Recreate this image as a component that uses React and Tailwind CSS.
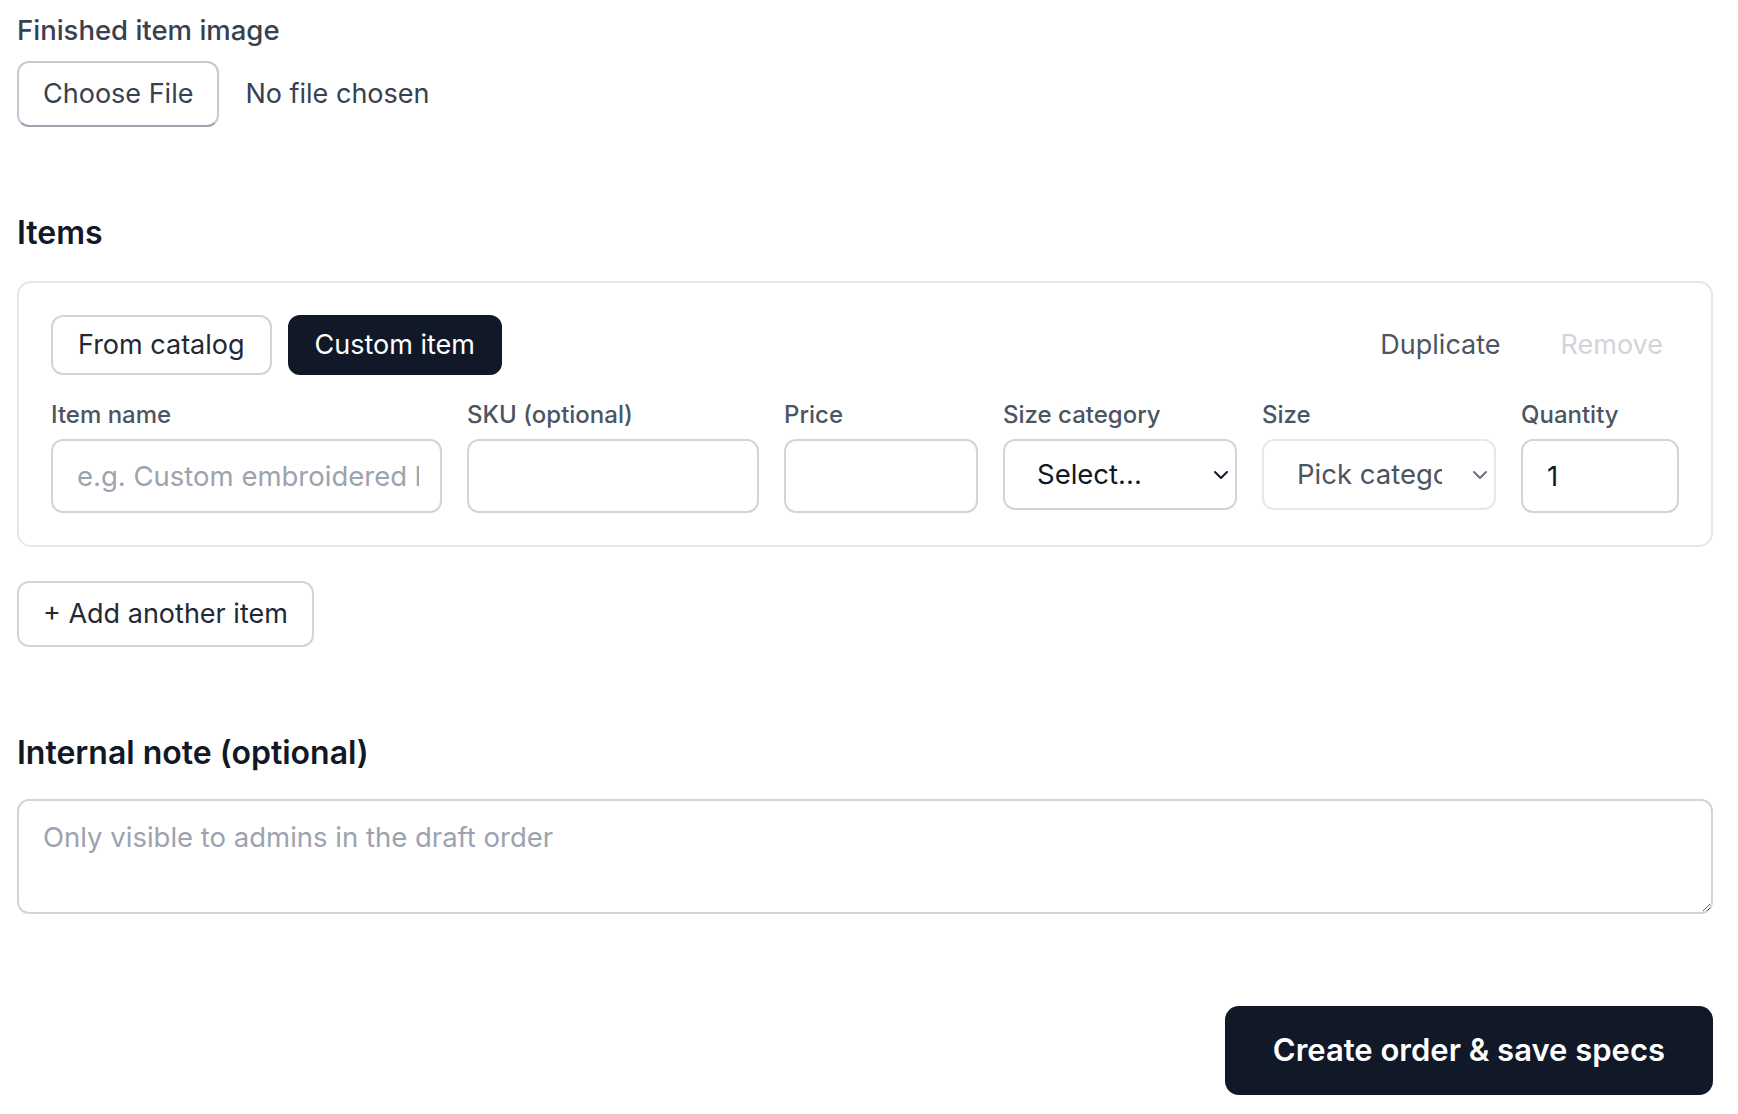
import React from "react";

function Chevron({ className }) {
  return (
    <svg
      viewBox="0 0 16 10"
      className={className}
      fill="none"
      stroke="currentColor"
      strokeWidth="2"
      strokeLinecap="round"
      strokeLinejoin="round"
    >
      <polyline points="2,2 8,8 14,2" />
    </svg>
  );
}

function Field({ label, children }) {
  return (
    <div className="flex flex-col">
      <label className="text-[24px] leading-[32px] font-medium text-[#4b5563]">{label}</label>
      <div className="mt-[8px]">{children}</div>
    </div>
  );
}

const inputCls =
  "block w-full h-[74px] rounded-[12px] border-2 border-[#d1d5db] bg-white pl-[24px] pr-[21px] text-[27.5px] text-[#111827] placeholder:text-[#9ca3af] outline-none";

export default function App() {
  return (
    <div className="min-h-screen bg-white font-['Inter','Noto_Sans',sans-serif] text-[#111827]">
      <div className="ml-[17px] w-[1696px] pt-[10px] pb-[20px]">
        {/* Image upload */}
        <section>
          <label className="block text-[27.5px] leading-[40px] font-medium text-[#374151]">
            Finished item image
          </label>
          <div className="mt-[11px] flex items-center gap-[26px]">
            <button
              type="button"
              className="h-[66px] rounded-[12px] border-2 border-[#c5c9d0] border-b-[#9ca3af] bg-white px-[24px] text-[27px] text-[#374151]"
            >
              Choose File
            </button>
            <span className="text-[27px] text-[#374151]">No file chosen</span>
          </div>
        </section>

        {/* Items */}
        <h2 className="mt-[86px] text-[32px] leading-[40px] font-semibold text-[#111827]">Items</h2>
        <div className="mt-[28px] rounded-[14px] border-2 border-[#e5e7eb] p-[32px]">
          <div className="flex items-center justify-between">
            <div className="flex gap-[16px]">
              <button
                type="button"
                className="h-[60px] rounded-[12px] border-2 border-[#d1d5db] bg-white px-[25px] text-[27px] text-[#1f2937]"
              >
                From catalog
              </button>
              <button
                type="button"
                className="h-[60px] rounded-[12px] border-2 border-[#111827] bg-[#111827] px-[25px] text-[27px] text-white"
              >
                Custom item
              </button>
            </div>
            <div className="flex items-center gap-[28px]">
              <button type="button" className="px-[16px] text-[27px] text-[#4b5563]">
                Duplicate
              </button>
              <button type="button" disabled className="px-[16px] text-[27px] text-[#d1d5db]">
                Remove
              </button>
            </div>
          </div>

          <div className="mt-[24px] grid grid-cols-[391px_292px_194px_234px_234px_1fr] gap-x-[25px]">
            <Field label="Item name">
              <input className={inputCls} placeholder="e.g. Custom embroidered linen napkin" />
            </Field>
            <Field label="SKU (optional)">
              <input className={inputCls} />
            </Field>
            <Field label="Price">
              <input className={inputCls} />
            </Field>
            <Field label="Size category">
              <div className="relative">
                <select className="block w-full h-[71px] appearance-none rounded-[12px] border-2 border-[#d1d5db] bg-white pl-[32px] pr-[48px] text-[27.5px] text-[#111827] outline-none">
                  <option>Select...</option>
                </select>
                <Chevron className="pointer-events-none absolute right-[8px] top-1/2 h-[10px] w-[16px] -translate-y-1/2 text-[#111827]" />
              </div>
            </Field>
            <Field label="Size">
              <div className="relative">
                <select
                  disabled
                  className="block w-full h-[71px] appearance-none rounded-[12px] border-2 border-[#e5e7eb] bg-white pl-[33px] pr-[52px] text-[27.5px] text-[#4b5563] outline-none"
                >
                  <option>Pick category first</option>
                </select>
                <Chevron className="pointer-events-none absolute right-[8px] top-1/2 h-[10px] w-[16px] -translate-y-1/2 text-[#6b7280]" />
              </div>
            </Field>
            <Field label="Quantity">
              <input className={inputCls} defaultValue="1" />
            </Field>
          </div>
        </div>

        <button
          type="button"
          className="mt-[34px] h-[66px] rounded-[12px] border-2 border-[#d1d5db] bg-white px-[24px] text-[27px] text-[#1f2937]"
        >
          + Add another item
        </button>

        {/* Internal note */}
        <h2 className="mt-[86px] text-[32px] leading-[40px] font-semibold text-[#111827]">
          Internal note (optional)
        </h2>
        <textarea
          rows={2}
          className="mt-[26px] block h-[115px] w-full rounded-[12px] border-2 border-[#d1d5db] bg-white px-[24px] py-[16px] text-[27.5px] leading-[40px] text-[#111827] placeholder:text-[#9ca3af] outline-none"
          placeholder="Only visible to admins in the draft order"
        />

        <div className="mt-[92px] flex justify-end">
          <button
            type="button"
            className="h-[89px] rounded-[14px] bg-[#111827] px-[48px] text-[31px] font-semibold text-white"
          >
            Create order &amp; save specs
          </button>
        </div>
      </div>
    </div>
  );
}
